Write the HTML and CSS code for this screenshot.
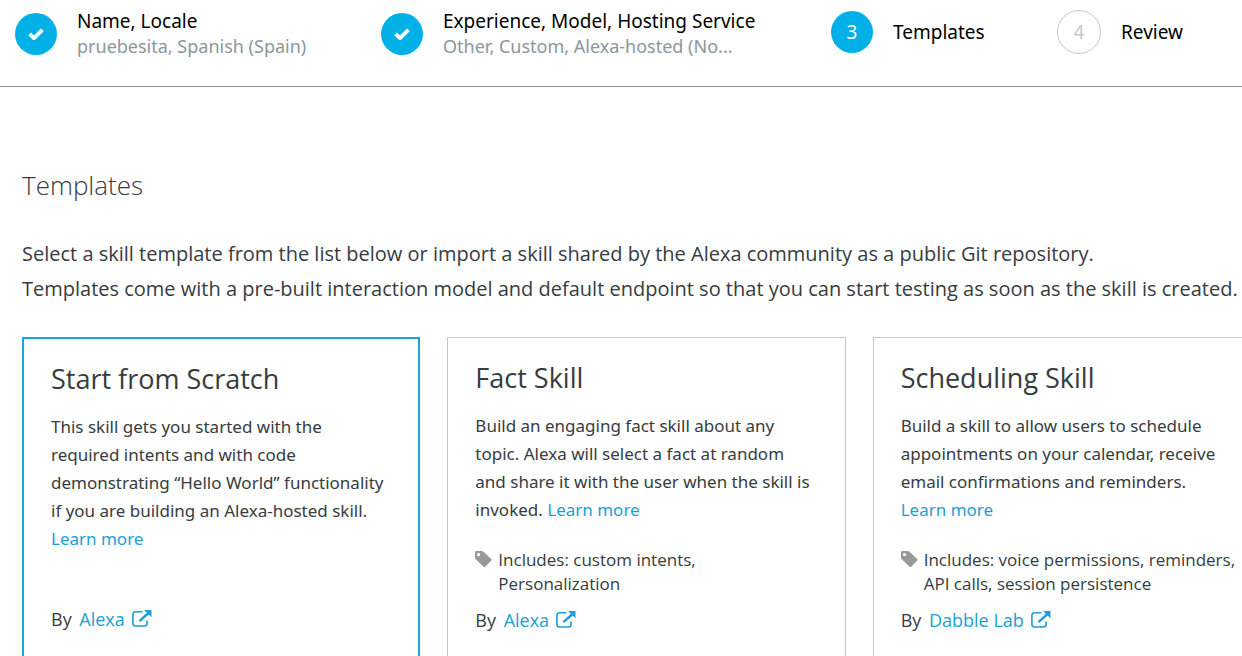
FILE: index.html
```html
<!DOCTYPE html>
<html lang="en">
<head>
<meta charset="utf-8">
<title>Templates</title>
<link rel="stylesheet" href="styles.css">
</head>
<body>
<svg class="sprite" aria-hidden="true">
  <symbol id="check" viewBox="0 0 16 12"><path d="M1.6 5.8 6 10.2 14.4 1.8" fill="none" stroke="currentColor" stroke-width="3.8"/></symbol>
  <symbol id="tag" viewBox="0 0 17 17"><path fill="currentColor" fill-rule="evenodd" d="M0 1.2Q0 0 1.2 0H6.6Q7.8 0 8.8 1L16.2 8Q17 8.9 16.2 9.7L10.2 15.8Q9.4 16.5 8.6 15.8L1 8.4Q0 7.4 0 6.4ZM3.6 2A1.6 1.6 0 1 0 3.6 5.2 1.6 1.6 0 1 0 3.6 2Z"/></symbol>
  <symbol id="external" viewBox="0 0 20 17"><path fill="none" stroke="currentColor" stroke-width="1.6" d="M10.5 1.8H3.6Q.9 1.8 .9 4.5V13.3Q.9 16 3.6 16H12.4Q15.1 16 15.1 13.3V10.5"/><path fill="none" stroke="currentColor" stroke-width="2.5" d="M7.5 11.2 16.5 3"/><path fill="currentColor" d="M12 0H19.5V7.3Z"/></symbol>
</svg>
<header>
  <ol class="steps">
    <li class="step">
      <span class="dot"><svg class="check"><use href="#check"/></svg></span>
      <div><div class="step-name">Name, Locale</div><div class="step-detail">pruebesita, Spanish (Spain)</div></div>
    </li>
    <li class="step">
      <span class="dot"><svg class="check"><use href="#check"/></svg></span>
      <div><div class="step-name">Experience, Model, Hosting Service</div><div class="step-detail">Other, Custom, Alexa-hosted (No...</div></div>
    </li>
    <li class="step" aria-current="step">
      <span class="dot">3</span>
      <div class="step-name">Templates</div>
    </li>
    <li class="step">
      <span class="dot dot-next">4</span>
      <div class="step-name">Review</div>
    </li>
  </ol>
</header>
<main>
  <h1>Templates</h1>
  <p class="intro">Select a skill template from the list below or import a skill shared by the Alexa community as a public Git repository.<br>Templates come with a pre-built interaction model and default endpoint so that you can start testing as soon as the skill is created.</p>
  <div class="cards">
    <article class="card selected">
      <h2>Start from Scratch</h2>
      <p class="desc">This skill gets you started with the required intents and with code demonstrating “Hello World” functionality if you are building an Alexa-hosted skill. <a class="more" href="#">Learn more</a></p>
      <p class="author">By <a href="#">Alexa<svg class="external"><use href="#external"/></svg></a></p>
    </article>
    <article class="card">
      <h2>Fact Skill</h2>
      <p class="desc">Build an engaging fact skill about any topic. Alexa will select a fact at random and share it with the user when the skill is invoked. <a class="more" href="#">Learn more</a></p>
      <div class="includes"><svg class="tag"><use href="#tag"/></svg><p>Includes: custom intents, Personalization</p></div>
      <p class="author">By <a href="#">Alexa<svg class="external"><use href="#external"/></svg></a></p>
    </article>
    <article class="card">
      <h2>Scheduling Skill</h2>
      <p class="desc">Build a skill to allow users to schedule appointments on your calendar, receive email confirmations and reminders. <a class="more" href="#">Learn more</a></p>
      <div class="includes"><svg class="tag"><use href="#tag"/></svg><p>Includes: voice permissions, reminders, API calls, session persistence</p></div>
      <p class="author">By <a href="#">Dabble Lab<svg class="external"><use href="#external"/></svg></a></p>
    </article>
  </div>
</main>
</body>
</html>
```
FILE: styles.css
```css
* {
  box-sizing: border-box;
}

body {
  margin: 0;
  height: 100vh;
  overflow: hidden;
  background: #fff;
  color: #363c40;
  font-family: "Open Sans", "Noto Sans", sans-serif;
}

h1, h2, p {
  margin: 0;
  font-weight: 400;
}

a {
  color: #1a9fd8;
  text-decoration: none;
}

.sprite {
  display: none;
}

header {
  border-bottom: 1px solid #8f9092;
}

.steps {
  display: grid;
  grid-template-columns: 366fr 450fr 226fr 185fr;
  align-items: start;
  margin: 0;
  padding: 8px 0 26px 15px;
  list-style: none;
  font-family: "Noto Sans", "Open Sans", sans-serif;
}

.step {
  display: flex;
  align-items: center;
  gap: 20px;
  min-width: 0;
  min-height: 48px;
  white-space: nowrap;
}

.dot {
  display: flex;
  align-items: center;
  justify-content: center;
  flex: none;
  width: 42px;
  height: 42px;
  border-radius: 50%;
  background: #00b0e6;
  color: #fff;
  font-size: 19px;
}

.dot-next {
  width: 44px;
  height: 44px;
  border: 1px solid #c8c8c8;
  background: #fff;
  color: #c8c8c8;
}

.check {
  width: 16px;
  height: 12px;
}

.step-name {
  color: #000;
  font-size: 19px;
  line-height: 26px;
}

.step-detail {
  padding-bottom: 2px;
  color: #8b989b;
  font-size: 18px;
  line-height: 24px;
}

main {
  padding: 80px 0 0 22px;
  overflow: hidden;
}

h1 {
  font-size: 26px;
  font-weight: 300;
  line-height: 36px;
}

.intro {
  margin-top: 33px;
  font-size: 20px;
  line-height: 35px;
  white-space: nowrap;
}

.cards {
  display: grid;
  grid-template-columns: repeat(3, 1fr);
  gap: 27px;
  margin: 31px -29px 0 0;
}

.card {
  display: flex;
  flex-direction: column;
  padding: 22px 27px 40px;
  border: 1px solid #c9c9c9;
}

.selected {
  border: 2px solid #18a8d8;
}

h2 {
  font-size: 27px;
  line-height: 36px;
}

.desc {
  margin-top: 16px;
  padding-right: 6px;
  font-family: "Noto Sans", "Open Sans", sans-serif;
  font-size: 17px;
  line-height: 28px;
}

.more {
  white-space: nowrap;
}

.includes {
  display: flex;
  gap: 6px;
  margin: 24px 0 10px;
  font-size: 17px;
  line-height: 24px;
}

.tag {
  flex: none;
  width: 17px;
  height: 17px;
  margin-top: 3px;
  color: #999;
}

.author {
  margin-top: auto;
  font-size: 18px;
  line-height: 28px;
}

.author a {
  margin-left: 3px;
}

.external {
  width: 20px;
  height: 17px;
  margin-left: 7px;
  vertical-align: -1px;
}
```
